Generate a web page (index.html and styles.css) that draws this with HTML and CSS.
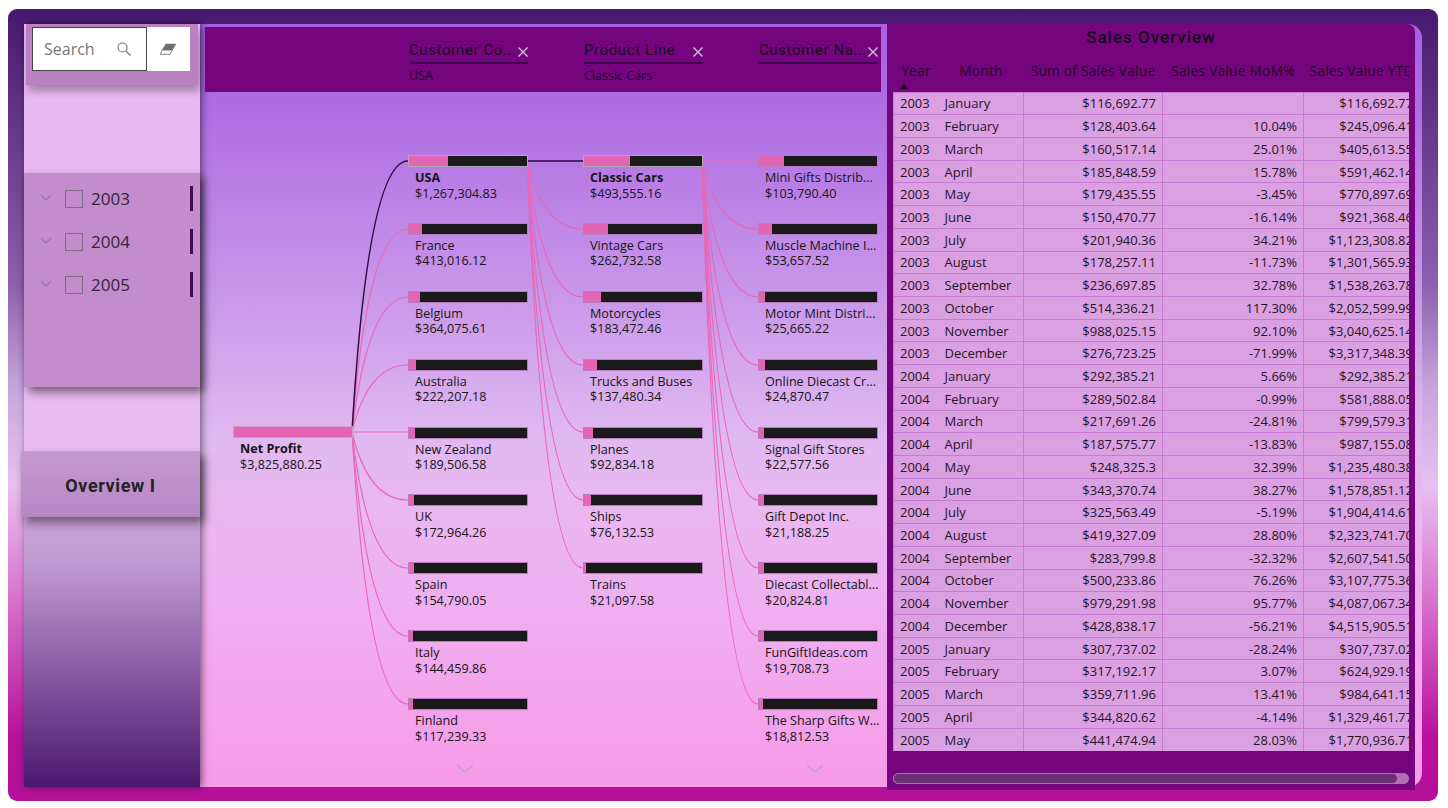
FILE: index.html
```html
<!DOCTYPE html>
<html lang="en">

<head>
    <meta charset="UTF-8">
    <meta name="viewport" content="width=device-width, initial-scale=1.0">
    <title>Sales Overview</title>
    <link rel="stylesheet" href="styles.css">
</head>

<body>
    <div class="frame">
        <div class="canvas">
            <aside class="sidebar">
                <div class="search-band">
                    <div class="search-box">
                        <span>Search</span>
                        <svg width="16" height="16" viewBox="0 0 16 16" fill="none" stroke="#777" stroke-width="1.2">
                            <circle cx="6.5" cy="6.5" r="4.5"/>
                            <path d="M10 10l4.5 4.5"/>
                        </svg>
                    </div>
                    <div class="eraser-box">
                        <svg width="17" height="12" viewBox="0 0 17 12">
                            <path d="M5.7.7h10.6l-3.7 6.3H2z" fill="#6e6e6e"/>
                            <path d="M2.2 7h10.2l-2.4 4.3H.4z" fill="#fff" stroke="#6e6e6e" stroke-width=".9"/>
                        </svg>
                    </div>
                </div>

                <div class="slicer">
                    <div class="slicer-row">
                        <svg class="chev" width="12" height="8" viewBox="0 0 12 8"><path d="M1 1l5 5 5-5" fill="none" stroke="#8f7f96" stroke-width="1.1"/></svg>
                        <span class="check"></span>
                        <span class="year">2003</span>
                        <span class="tick"></span>
                    </div>
                    <div class="slicer-row">
                        <svg class="chev" width="12" height="8" viewBox="0 0 12 8"><path d="M1 1l5 5 5-5" fill="none" stroke="#8f7f96" stroke-width="1.1"/></svg>
                        <span class="check"></span>
                        <span class="year">2004</span>
                        <span class="tick"></span>
                    </div>
                    <div class="slicer-row">
                        <svg class="chev" width="12" height="8" viewBox="0 0 12 8"><path d="M1 1l5 5 5-5" fill="none" stroke="#8f7f96" stroke-width="1.1"/></svg>
                        <span class="check"></span>
                        <span class="year">2005</span>
                        <span class="tick"></span>
                    </div>
                </div>

                <div class="nav-button">Overview I</div>
            </aside>

            <main class="main">
                <div class="strip">
                    <div class="strip-col">
                        <div class="strip-head"><span>Customer Co...</span><svg width="10" height="10" viewBox="0 0 10 10"><path d="M.5.5l9 9M9.5.5l-9 9" stroke="#d0c4d0" stroke-width="1.4"/></svg></div>
                        <div class="strip-sub">USA</div>
                    </div>
                    <div class="strip-col">
                        <div class="strip-head"><span>Product Line</span><svg width="10" height="10" viewBox="0 0 10 10"><path d="M.5.5l9 9M9.5.5l-9 9" stroke="#d0c4d0" stroke-width="1.4"/></svg></div>
                        <div class="strip-sub">Classic Cars</div>
                    </div>
                    <div class="strip-col">
                        <div class="strip-head"><span>Customer Na...</span><svg width="10" height="10" viewBox="0 0 10 10"><path d="M.5.5l9 9M9.5.5l-9 9" stroke="#d0c4d0" stroke-width="1.4"/></svg></div>
                        <div class="strip-sub">&nbsp;</div>
                    </div>
                </div>

                <div class="tree">
                    <!-- links between the nodes, in page coordinates -->
                    <svg class="links" width="687" height="695" viewBox="200 92 687 695" fill="none">
                        <g stroke="#e868b8" stroke-width="1.2">
                            <path d="M352 432Q368 229 408 229"/>
                            <path d="M352 432Q368 297 408 297"/>
                            <path d="M352 432Q368 365 408 365"/>
                            <path d="M352 432H408"/>
                            <path d="M352 432Q368 500 408 500"/>
                            <path d="M352 432Q368 568 408 568"/>
                            <path d="M352 432Q368 636 408 636"/>
                            <path d="M352 432Q368 704 408 704"/>

                            <path d="M527 161Q543 229 583 229"/>
                            <path d="M527 161Q543 297 583 297"/>
                            <path d="M527 161Q543 365 583 365"/>
                            <path d="M527 161Q543 432 583 432"/>
                            <path d="M527 161Q543 500 583 500"/>
                            <path d="M527 161Q543 568 583 568"/>

                            <path d="M702 161H758"/>
                            <path d="M702 161Q718 229 758 229"/>
                            <path d="M702 161Q718 297 758 297"/>
                            <path d="M702 161Q718 365 758 365"/>
                            <path d="M702 161Q718 432 758 432"/>
                            <path d="M702 161Q718 500 758 500"/>
                            <path d="M702 161Q718 568 758 568"/>
                            <path d="M702 161Q718 636 758 636"/>
                            <path d="M702 161Q718 704 758 704"/>
                        </g>
                        <g stroke="#2d0a40" stroke-width="1.5">
                            <path d="M352 432Q368 161 408 161"/>
                            <path d="M527 161H583"/>
                        </g>
                    </svg>

                    <div class="tree-col tree-root">
                        <div class="node active">
                            <div class="bar"><div class="fill" style="width:100%"></div></div>
                            <div class="label"><b>Net Profit</b></div>
                            <div class="value">$3,825,880.25</div>
                        </div>
                    </div>

                    <div class="tree-col">
                        <div class="node selected">
                            <div class="bar"><div class="fill" style="width:33.1%"></div></div>
                            <div class="label"><b>USA</b></div>
                            <div class="value">$1,267,304.83</div>
                        </div>
                        <div class="node">
                            <div class="bar"><div class="fill" style="width:10.8%"></div></div>
                            <div class="label">France</div>
                            <div class="value">$413,016.12</div>
                        </div>
                        <div class="node">
                            <div class="bar"><div class="fill" style="width:9.5%"></div></div>
                            <div class="label">Belgium</div>
                            <div class="value">$364,075.61</div>
                        </div>
                        <div class="node">
                            <div class="bar"><div class="fill" style="width:5.8%"></div></div>
                            <div class="label">Australia</div>
                            <div class="value">$222,207.18</div>
                        </div>
                        <div class="node">
                            <div class="bar"><div class="fill" style="width:5%"></div></div>
                            <div class="label">New Zealand</div>
                            <div class="value">$189,506.58</div>
                        </div>
                        <div class="node">
                            <div class="bar"><div class="fill" style="width:4.5%"></div></div>
                            <div class="label">UK</div>
                            <div class="value">$172,964.26</div>
                        </div>
                        <div class="node">
                            <div class="bar"><div class="fill" style="width:4%"></div></div>
                            <div class="label">Spain</div>
                            <div class="value">$154,790.05</div>
                        </div>
                        <div class="node">
                            <div class="bar"><div class="fill" style="width:3.8%"></div></div>
                            <div class="label">Italy</div>
                            <div class="value">$144,459.86</div>
                        </div>
                        <div class="node">
                            <div class="bar"><div class="fill" style="width:3.1%"></div></div>
                            <div class="label">Finland</div>
                            <div class="value">$117,239.33</div>
                        </div>
                        <svg class="more" width="18" height="10" viewBox="0 0 18 10"><path d="M1 1l8 7 8-7" fill="none" stroke="#b8a8b8" stroke-width="1.5"/></svg>
                    </div>

                    <div class="tree-col">
                        <div class="node selected">
                            <div class="bar"><div class="fill" style="width:38.9%"></div></div>
                            <div class="label"><b>Classic Cars</b></div>
                            <div class="value">$493,555.16</div>
                        </div>
                        <div class="node">
                            <div class="bar"><div class="fill" style="width:20.7%"></div></div>
                            <div class="label">Vintage Cars</div>
                            <div class="value">$262,732.58</div>
                        </div>
                        <div class="node">
                            <div class="bar"><div class="fill" style="width:14.5%"></div></div>
                            <div class="label">Motorcycles</div>
                            <div class="value">$183,472.46</div>
                        </div>
                        <div class="node">
                            <div class="bar"><div class="fill" style="width:10.8%"></div></div>
                            <div class="label">Trucks and Buses</div>
                            <div class="value">$137,480.34</div>
                        </div>
                        <div class="node">
                            <div class="bar"><div class="fill" style="width:7.3%"></div></div>
                            <div class="label">Planes</div>
                            <div class="value">$92,834.18</div>
                        </div>
                        <div class="node">
                            <div class="bar"><div class="fill" style="width:6%"></div></div>
                            <div class="label">Ships</div>
                            <div class="value">$76,132.53</div>
                        </div>
                        <div class="node">
                            <div class="bar"><div class="fill" style="width:1.7%"></div></div>
                            <div class="label">Trains</div>
                            <div class="value">$21,097.58</div>
                        </div>
                    </div>

                    <div class="tree-col">
                        <div class="node">
                            <div class="bar"><div class="fill" style="width:21%"></div></div>
                            <div class="label">Mini Gifts Distrib...</div>
                            <div class="value">$103,790.40</div>
                        </div>
                        <div class="node">
                            <div class="bar"><div class="fill" style="width:10.9%"></div></div>
                            <div class="label">Muscle Machine I...</div>
                            <div class="value">$53,657.52</div>
                        </div>
                        <div class="node">
                            <div class="bar"><div class="fill" style="width:5.2%"></div></div>
                            <div class="label">Motor Mint Distri...</div>
                            <div class="value">$25,665.22</div>
                        </div>
                        <div class="node">
                            <div class="bar"><div class="fill" style="width:5%"></div></div>
                            <div class="label">Online Diecast Cr...</div>
                            <div class="value">$24,870.47</div>
                        </div>
                        <div class="node">
                            <div class="bar"><div class="fill" style="width:4.6%"></div></div>
                            <div class="label">Signal Gift Stores</div>
                            <div class="value">$22,577.56</div>
                        </div>
                        <div class="node">
                            <div class="bar"><div class="fill" style="width:4.3%"></div></div>
                            <div class="label">Gift Depot Inc.</div>
                            <div class="value">$21,188.25</div>
                        </div>
                        <div class="node">
                            <div class="bar"><div class="fill" style="width:4.2%"></div></div>
                            <div class="label">Diecast Collectabl...</div>
                            <div class="value">$20,824.81</div>
                        </div>
                        <div class="node">
                            <div class="bar"><div class="fill" style="width:4%"></div></div>
                            <div class="label">FunGiftIdeas.com</div>
                            <div class="value">$19,708.73</div>
                        </div>
                        <div class="node">
                            <div class="bar"><div class="fill" style="width:3.8%"></div></div>
                            <div class="label">The Sharp Gifts W...</div>
                            <div class="value">$18,812.53</div>
                        </div>
                        <svg class="more" width="18" height="10" viewBox="0 0 18 10"><path d="M1 1l8 7 8-7" fill="none" stroke="#b8a8b8" stroke-width="1.5"/></svg>
                    </div>
                </div>
            </main>

            <section class="panel">
                <h1 class="panel-title">Sales Overview</h1>
                <div class="table-wrap">
                    <table class="sales">
                        <colgroup>
                            <col class="c-year"><col class="c-month"><col class="c-sum"><col class="c-mom"><col class="c-ytd">
                        </colgroup>
                        <thead>
                            <tr>
                                <th>Year<span class="sort"></span></th>
                                <th>Month</th>
                                <th>Sum of Sales Value</th>
                                <th>Sales Value MoM%</th>
                                <th>Sales Value YTD</th>
                            </tr>
                        </thead>
                        <tbody>
                            <tr><td>2003</td><td>January</td><td>$116,692.77</td><td></td><td>$116,692.77</td></tr>
                            <tr><td>2003</td><td>February</td><td>$128,403.64</td><td>10.04%</td><td>$245,096.41</td></tr>
                            <tr><td>2003</td><td>March</td><td>$160,517.14</td><td>25.01%</td><td>$405,613.55</td></tr>
                            <tr><td>2003</td><td>April</td><td>$185,848.59</td><td>15.78%</td><td>$591,462.14</td></tr>
                            <tr><td>2003</td><td>May</td><td>$179,435.55</td><td>-3.45%</td><td>$770,897.69</td></tr>
                            <tr><td>2003</td><td>June</td><td>$150,470.77</td><td>-16.14%</td><td>$921,368.46</td></tr>
                            <tr><td>2003</td><td>July</td><td>$201,940.36</td><td>34.21%</td><td>$1,123,308.82</td></tr>
                            <tr><td>2003</td><td>August</td><td>$178,257.11</td><td>-11.73%</td><td>$1,301,565.93</td></tr>
                            <tr><td>2003</td><td>September</td><td>$236,697.85</td><td>32.78%</td><td>$1,538,263.78</td></tr>
                            <tr><td>2003</td><td>October</td><td>$514,336.21</td><td>117.30%</td><td>$2,052,599.99</td></tr>
                            <tr><td>2003</td><td>November</td><td>$988,025.15</td><td>92.10%</td><td>$3,040,625.14</td></tr>
                            <tr><td>2003</td><td>December</td><td>$276,723.25</td><td>-71.99%</td><td>$3,317,348.39</td></tr>
                            <tr><td>2004</td><td>January</td><td>$292,385.21</td><td>5.66%</td><td>$292,385.21</td></tr>
                            <tr><td>2004</td><td>February</td><td>$289,502.84</td><td>-0.99%</td><td>$581,888.05</td></tr>
                            <tr><td>2004</td><td>March</td><td>$217,691.26</td><td>-24.81%</td><td>$799,579.31</td></tr>
                            <tr><td>2004</td><td>April</td><td>$187,575.77</td><td>-13.83%</td><td>$987,155.08</td></tr>
                            <tr><td>2004</td><td>May</td><td>$248,325.3</td><td>32.39%</td><td>$1,235,480.38</td></tr>
                            <tr><td>2004</td><td>June</td><td>$343,370.74</td><td>38.27%</td><td>$1,578,851.12</td></tr>
                            <tr><td>2004</td><td>July</td><td>$325,563.49</td><td>-5.19%</td><td>$1,904,414.61</td></tr>
                            <tr><td>2004</td><td>August</td><td>$419,327.09</td><td>28.80%</td><td>$2,323,741.70</td></tr>
                            <tr><td>2004</td><td>September</td><td>$283,799.8</td><td>-32.32%</td><td>$2,607,541.50</td></tr>
                            <tr><td>2004</td><td>October</td><td>$500,233.86</td><td>76.26%</td><td>$3,107,775.36</td></tr>
                            <tr><td>2004</td><td>November</td><td>$979,291.98</td><td>95.77%</td><td>$4,087,067.34</td></tr>
                            <tr><td>2004</td><td>December</td><td>$428,838.17</td><td>-56.21%</td><td>$4,515,905.51</td></tr>
                            <tr><td>2005</td><td>January</td><td>$307,737.02</td><td>-28.24%</td><td>$307,737.02</td></tr>
                            <tr><td>2005</td><td>February</td><td>$317,192.17</td><td>3.07%</td><td>$624,929.19</td></tr>
                            <tr><td>2005</td><td>March</td><td>$359,711.96</td><td>13.41%</td><td>$984,641.15</td></tr>
                            <tr><td>2005</td><td>April</td><td>$344,820.62</td><td>-4.14%</td><td>$1,329,461.77</td></tr>
                            <tr><td>2005</td><td>May</td><td>$441,474.94</td><td>28.03%</td><td>$1,770,936.71</td></tr>
                        </tbody>
                    </table>
                </div>
                <div class="scrollbar"><div class="thumb"></div></div>
            </section>
        </div>
    </div>
</body>

</html>
```

FILE: styles.css
```css
html, body {
    margin: 0;
    padding: 0;
    height: 808px;
    overflow: hidden;
    background-color: #fff;
}

body {
    font-family: 'Open Sans', 'Noto Sans', sans-serif;
    color: #151515;
}

.frame {
    box-sizing: border-box;
    width: 1430px;
    height: 792px;
    margin: 9px 0 0 8px;
    padding: 15px 16px 14px 16px;
    border-radius: 9px;
    background: linear-gradient(180deg, #481870 0%, #8f60ae 35%, #c8a6dc 48%, #e8c0f0 60%, #d870cc 75%, #b8109c 92%, #b5109a 100%);
}

.canvas {
    display: flex;
    height: 763px;
    border-radius: 3px 14px 14px 3px;
    background: linear-gradient(180deg, #a860e0 0%, #ad6ae2 9%, #c896ea 35%, #e0b8f0 54%, #e9b8f0 62%, #efaff0 76%, #f89ae8 100%);
}

/* left column */
.sidebar {
    flex: 0 0 176px;
    display: flex;
    flex-direction: column;
    background: linear-gradient(180deg, #e8b8f0 0%, #e8bcf2 64%, #c8a0d8 66%, #c49cd4 70%, #4b1870 100%);
    box-shadow: 2px 0 7px rgba(0, 0, 0, 0.5);
}

.search-band {
    display: flex;
    align-items: flex-start;
    height: 58px;
    margin: 0 2px;
    padding: 3px 0 0 6px;
    background-color: #bb80c0;
    box-shadow: 2px 6px 8px rgba(0, 0, 0, 0.3);
}

.search-box {
    box-sizing: border-box;
    display: flex;
    align-items: center;
    justify-content: space-between;
    width: 115px;
    height: 44px;
    padding: 0 14px 0 11px;
    background-color: #fff;
    border: 1px solid #444;
    color: #777;
    font-size: 16px;
}

.eraser-box {
    display: flex;
    align-items: center;
    justify-content: center;
    width: 43px;
    height: 44px;
    background-color: #fff;
}

.slicer {
    box-sizing: border-box;
    height: 214px;
    margin-top: 88px;
    padding-top: 4px;
    background-color: #c38ccc;
    box-shadow: 4px 5px 9px rgba(0, 0, 0, 0.5);
}

.slicer-row {
    display: flex;
    align-items: center;
    height: 43px;
    padding-left: 16px;
    color: #33263a;
}

.chev {
    margin-top: -2px;
}

.check {
    box-sizing: border-box;
    width: 18px;
    height: 18px;
    margin-left: 13px;
    border: 1px solid #7b6c80;
}

.year {
    margin-left: 8px;
    font-size: 17px;
}

.tick {
    width: 3px;
    height: 25px;
    margin-left: auto;
    margin-right: 7px;
    background-color: #3f0a50;
}

.nav-button {
    height: 66px;
    margin: 64px 0 0 -3px;
    line-height: 70px;
    text-align: center;
    font-family: 'Roboto', sans-serif;
    font-size: 18px;
    font-weight: 700;
    letter-spacing: 0.6px;
    color: #222;
    background: linear-gradient(180deg, #c599d0 0%, #b787c4 100%);
    box-shadow: 4px 6px 9px rgba(0, 0, 0, 0.5);
}

/* decomposition tree */
.main {
    flex: 0 0 687px;
    display: flex;
    flex-direction: column;
    min-width: 0;
}

.strip {
    box-sizing: border-box;
    display: flex;
    gap: 56px;
    height: 65px;
    margin: 3px 6px 0 5px;
    padding: 11px 0 0 204px;
    background-color: #75057f;
}

.strip-col {
    flex: 0 0 119px;
    width: 119px;
}

.strip-head {
    display: flex;
    align-items: center;
    justify-content: space-between;
    height: 24px;
    border-bottom: 2px solid #3a0a50;
    font-family: 'Roboto', sans-serif;
    font-size: 15px;
    letter-spacing: 0.6px;
    white-space: nowrap;
    color: #1a0a20;
}

.strip-head svg {
    margin-top: 3px;
}

.strip-sub {
    margin-top: 3px;
    font-size: 12.5px;
    color: #1f0528;
}

.tree {
    position: relative;
    flex: 1;
    display: flex;
    gap: 56px;
    padding: 63px 0 0 33px;
    overflow: hidden;
}

.links {
    position: absolute;
    left: 0;
    top: 0;
}

.tree-col {
    position: relative;
    flex: 0 0 119px;
    width: 119px;
}

.tree-root {
    padding-top: 271px;
}

.node {
    box-sizing: border-box;
    height: 67.9px;
    font-size: 12.6px;
    line-height: 15.5px;
    white-space: nowrap;
}

.bar {
    box-sizing: border-box;
    height: 12px;
    margin-right: -1px;
    margin-bottom: 3px;
    background-color: #1a1a1a;
    border: 1px solid #b97cc0;
}

.fill {
    height: 100%;
    background-color: #e565b5;
}

.node.selected .bar {
    border-color: #b0a8b0;
}

.node.active .bar {
    border-color: #d0a0c4;
}

.label, .value {
    padding-left: 7px;
}

.more {
    display: block;
    margin: -2px auto 0;
    padding-right: 6px;
}

/* right panel */
.panel {
    box-sizing: border-box;
    flex: 0 0 528px;
    height: 766px;
    padding: 0 6px;
    background-color: #75057f;
    border-top-right-radius: 8px;
}

.panel-title {
    height: 31px;
    margin: 0;
    line-height: 26px;
    text-align: center;
    font-family: 'Roboto', sans-serif;
    font-size: 17px;
    font-weight: 500;
    letter-spacing: 1px;
    color: #15061b;
}

.table-wrap {
    width: 516px;
    overflow: hidden;
}

.sales {
    width: 526px;
    table-layout: fixed;
    border-collapse: collapse;
    font-size: 13px;
}

.c-year { width: 45px; }
.c-month { width: 85px; }
.c-sum { width: 139px; }
.c-mom { width: 141px; }
.c-ytd { width: 116px; }

.sales th {
    position: relative;
    height: 37px;
    padding: 0 0 5px;
    box-sizing: border-box;
    font-weight: 400;
    font-size: 13.8px;
    letter-spacing: 0.2px;
    color: #1a0a20;
    white-space: nowrap;
}

.sales th:last-child {
    text-align: left;
    padding-left: 6px;
}

.sort {
    position: absolute;
    left: 6px;
    bottom: 3px;
    border-left: 4px solid transparent;
    border-right: 4px solid transparent;
    border-bottom: 5px solid #111;
}

.sales td {
    height: 22.72px;
    padding: 0 6px;
    box-sizing: border-box;
    background-color: #dba0e2;
    border: 1px solid #c67ad4;
    text-align: right;
    color: #1f1524;
    white-space: nowrap;
}

.sales td:nth-child(1) {
    border-right: none;
    text-align: left;
}

.sales td:nth-child(2) {
    border-left: none;
    text-align: left;
}

.sales tbody tr:last-child td {
    border-bottom: none;
}

.scrollbar {
    box-sizing: border-box;
    width: 516px;
    height: 11px;
    margin-top: 22px;
    border-radius: 6px;
    background-color: #b070b8;
}

.thumb {
    box-sizing: border-box;
    width: 505px;
    height: 100%;
    border: 1px solid #a870b0;
    border-radius: 6px;
    background-color: #6a3070;
}
```
